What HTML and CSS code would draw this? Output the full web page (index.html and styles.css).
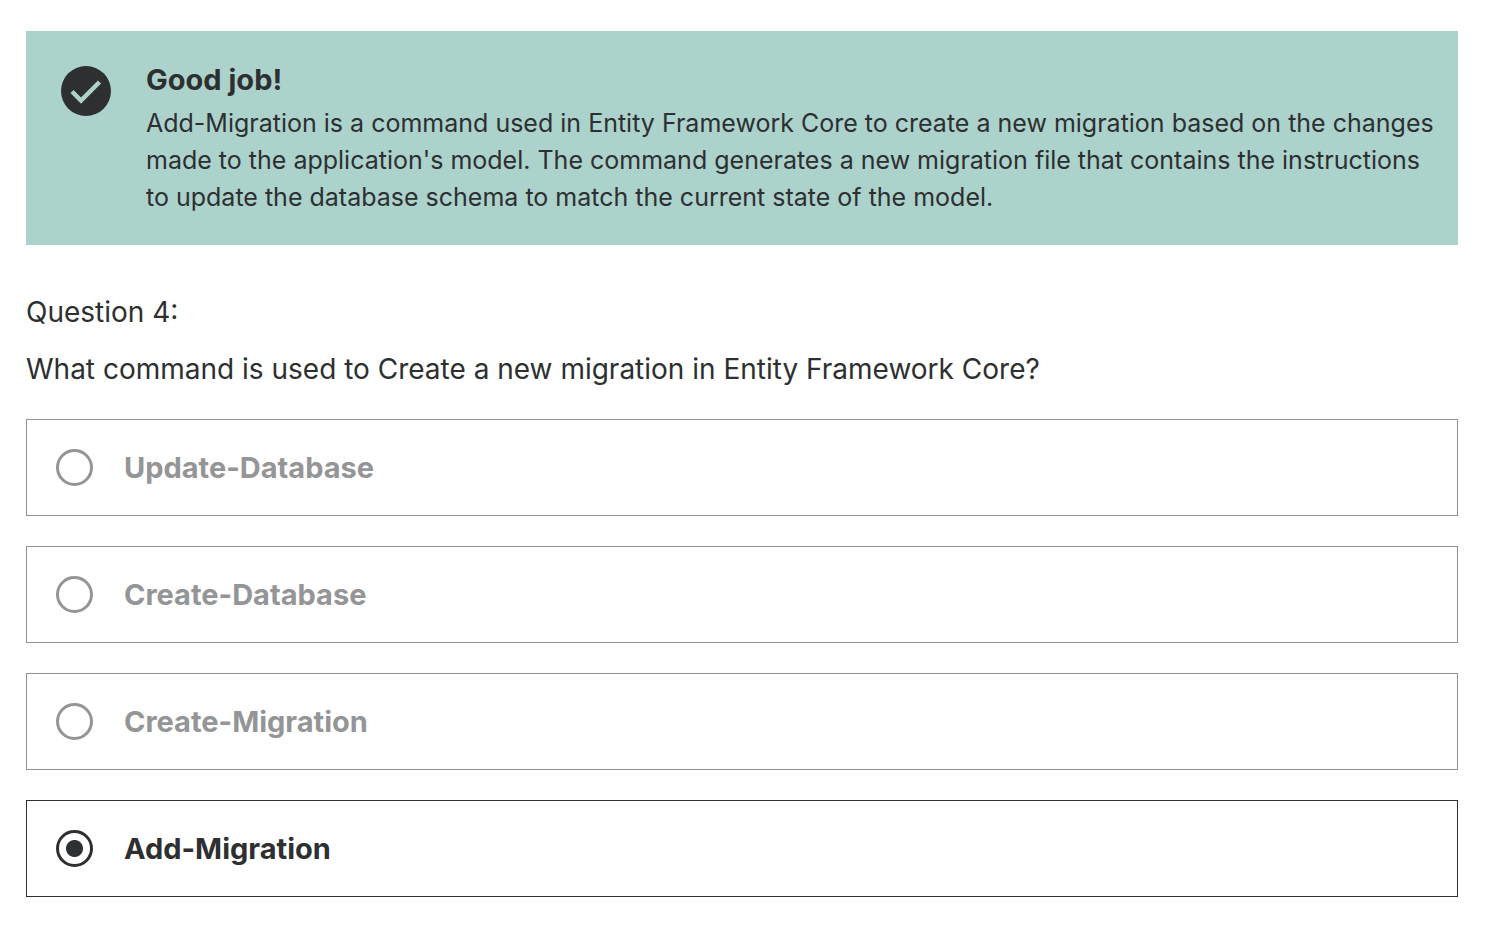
FILE: index.html
```html
<!DOCTYPE html>
<html lang="en">
<head>
<meta charset="utf-8">
<meta name="viewport" content="width=device-width, initial-scale=1">
<title>Question 4</title>
<link rel="stylesheet" href="styles.css">
</head>
<body>
<main class="page">
  <section class="alert" role="status">
    <svg class="alert-icon" viewBox="0 0 50 50" aria-hidden="true">
      <circle cx="25" cy="25" r="25" fill="#2d2f31"/>
      <path d="M11 25.500 20 34.500 38.500 16" fill="none" stroke="#acd2cc" stroke-width="4.500"/>
    </svg>
    <div class="alert-body">
      <h2 class="alert-title">Good job!</h2>
      <p class="alert-text">Add-Migration is a command used in Entity Framework Core to create a new migration based on the changes made to the application's model. The command generates a new migration file that contains the instructions to update the database schema to match the current state of the model.</p>
    </div>
  </section>
  <form class="question">
    <p class="question-number">Question 4:</p>
    <p class="question-text" id="question">What command is used to Create a new migration in Entity Framework Core?</p>
    <div class="answers" role="radiogroup" aria-labelledby="question">
      <label class="answer"><input class="answer-radio" type="radio" name="answer"><span>Update-Database</span></label>
      <label class="answer"><input class="answer-radio" type="radio" name="answer"><span>Create-Database</span></label>
      <label class="answer"><input class="answer-radio" type="radio" name="answer"><span>Create-Migration</span></label>
      <label class="answer answer-selected"><input class="answer-radio" type="radio" name="answer" checked><span>Add-Migration</span></label>
    </div>
  </form>
</main>
</body>
</html>
```
FILE: styles.css
```css
* { box-sizing: border-box; }
body {
  margin: 0;
  background: #fff;
  color: #2d2f31;
  font-family: Inter, "Liberation Sans", sans-serif;
}
h2, p { margin: 0; }
.page { padding: 31px 36px 30px 26px; }
.alert {
  display: flex;
  align-items: flex-start;
  gap: 35px;
  padding: 30px 20px 29px 35px;
  background: #acd2cc;
}
.alert-icon { flex: none; width: 50px; height: 50px; margin-top: 5px; }
.alert-title { font-size: 29px; line-height: 38px; font-weight: 700; }
.alert-text { margin-top: 6px; font-size: 25px; line-height: 37px; }
.question { padding-top: 48px; }
.question-number, .question-text { font-size: 28px; line-height: 38px; }
.question-text { margin-top: 19px; }
.answers { display: grid; gap: 30px; margin-top: 31px; }
.answer {
  display: flex;
  align-items: center;
  gap: 31px;
  padding: 29px;
  border: 1px solid #8f9192;
  color: #949596;
  font-size: 29px;
  line-height: 37px;
  font-weight: 700;
}
.answer-selected { border-color: #2d2f31; color: #2d2f31; }
.answer-radio {
  appearance: none;
  flex: none;
  width: 37px;
  height: 37px;
  margin: 0;
  border: 3px solid currentColor;
  border-radius: 50%;
  color: inherit;
}
.answer-radio:checked { background: radial-gradient(circle, currentColor 8px, transparent 9px); }
```
